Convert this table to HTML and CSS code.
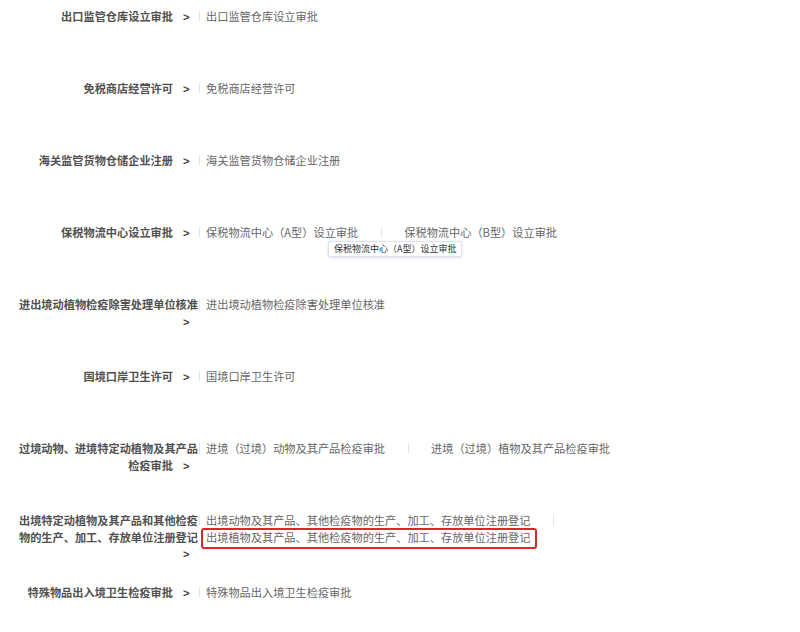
FILE: index.html
```html
<!DOCTYPE html>
<html lang="zh-CN">
<head>
<meta charset="utf-8">
<title>审批事项</title>
<link rel="stylesheet" href="styles.css">
</head>
<body>
<div class="list">
  <div class="row">
    <div class="label">出口监管仓库设立审批<span class="arrow">&gt;</span></div>
    <div class="divider"></div>
    <div class="items"><span class="item">出口监管仓库设立审批</span></div>
  </div>
  <div class="row">
    <div class="label">免税商店经营许可<span class="arrow">&gt;</span></div>
    <div class="divider"></div>
    <div class="items"><span class="item">免税商店经营许可</span></div>
  </div>
  <div class="row">
    <div class="label">海关监管货物仓储企业注册<span class="arrow">&gt;</span></div>
    <div class="divider"></div>
    <div class="items"><span class="item">海关监管货物仓储企业注册</span></div>
  </div>
  <div class="row">
    <div class="label">保税物流中心设立审批<span class="arrow">&gt;</span></div>
    <div class="divider"></div>
    <div class="items">
      <span class="item has-tip">保税物流中心（A型）设立审批<span class="tooltip">保税物流中心（A型）设立审批</span></span>
      <span class="sep"></span>
      <span class="item">保税物流中心（B型）设立审批</span>
    </div>
  </div>
  <div class="row">
    <div class="label">进出境动植物检疫除害处理单位核准<span class="arrow">&gt;</span></div>
    <div class="divider"></div>
    <div class="items"><span class="item">进出境动植物检疫除害处理单位核准</span></div>
  </div>
  <div class="row">
    <div class="label">国境口岸卫生许可<span class="arrow">&gt;</span></div>
    <div class="divider"></div>
    <div class="items"><span class="item">国境口岸卫生许可</span></div>
  </div>
  <div class="row">
    <div class="label">过境动物、进境特定动植物及其产品检疫审批<span class="arrow">&gt;</span></div>
    <div class="divider"></div>
    <div class="items">
      <span class="item">进境（过境）动物及其产品检疫审批</span>
      <span class="sep"></span>
      <span class="item">进境（过境）植物及其产品检疫审批</span>
    </div>
  </div>
  <div class="row">
    <div class="label">出境特定动植物及其产品和其他检疫物的生产、加工、存放单位注册登记<span class="arrow">&gt;</span></div>
    <div class="divider"></div>
    <div class="items">
      <span class="item">出境动物及其产品、其他检疫物的生产、加工、存放单位注册登记</span>
      <span class="sep"></span>
      <span class="item highlight">出境植物及其产品、其他检疫物的生产、加工、存放单位注册登记</span>
    </div>
  </div>
  <div class="row">
    <div class="label">特殊物品出入境卫生检疫审批<span class="arrow">&gt;</span></div>
    <div class="divider"></div>
    <div class="items"><span class="item">特殊物品出入境卫生检疫审批</span></div>
  </div>
</div>
</body>
</html>
```

FILE: styles.css
```css
html, body {
  margin: 0;
  padding: 0;
  background: #ffffff;
}

body {
  padding: 8px 0 0 8px;
  font-family: "Noto Sans CJK SC", "Liberation Sans", sans-serif;
  font-size: 11.2px;
  line-height: 16.5px;
}

.list {
  display: flex;
  flex-direction: column;
}

.row {
  display: flex;
  align-items: flex-start;
  min-height: 72px;
}

.label {
  width: 190px;
  flex: none;
  text-align: right;
  font-weight: bold;
  color: #505050;
}

.arrow {
  display: inline-block;
  margin-left: 10px;
  margin-right: 8.5px;
  font-family: "Liberation Sans", sans-serif;
  font-weight: bold;
  color: #444444;
}

.divider {
  flex: none;
  width: 1px;
  height: 11px;
  margin-top: 3px;
  margin-left: 1px;
  background: #e4e4e4;
}

.items {
  flex: 1;
  display: flex;
  flex-wrap: wrap;
  align-items: flex-start;
  margin-left: 6px;
  color: #666666;
}

.item {
  white-space: nowrap;
}

.sep {
  flex: none;
  width: 1px;
  height: 11px;
  margin: 3px 22px 0 23px;
  background: #e4e4e4;
}

.has-tip {
  position: relative;
}

.tooltip {
  position: absolute;
  left: 122px;
  top: 17px;
  padding: 1px 5px;
  font-size: 9px;
  line-height: 12px;
  color: #333333;
  background: #ffffff;
  border: 1px solid #dfe2ee;
  border-radius: 2px;
  box-shadow: 0 1px 3px rgba(60, 70, 120, 0.18);
  white-space: nowrap;
}

.highlight {
  position: relative;
}

.highlight::after {
  content: "";
  position: absolute;
  top: -1px;
  bottom: -4px;
  left: -5px;
  right: -7px;
  border: 2px solid #e3232a;
  border-radius: 3px;
}
```
